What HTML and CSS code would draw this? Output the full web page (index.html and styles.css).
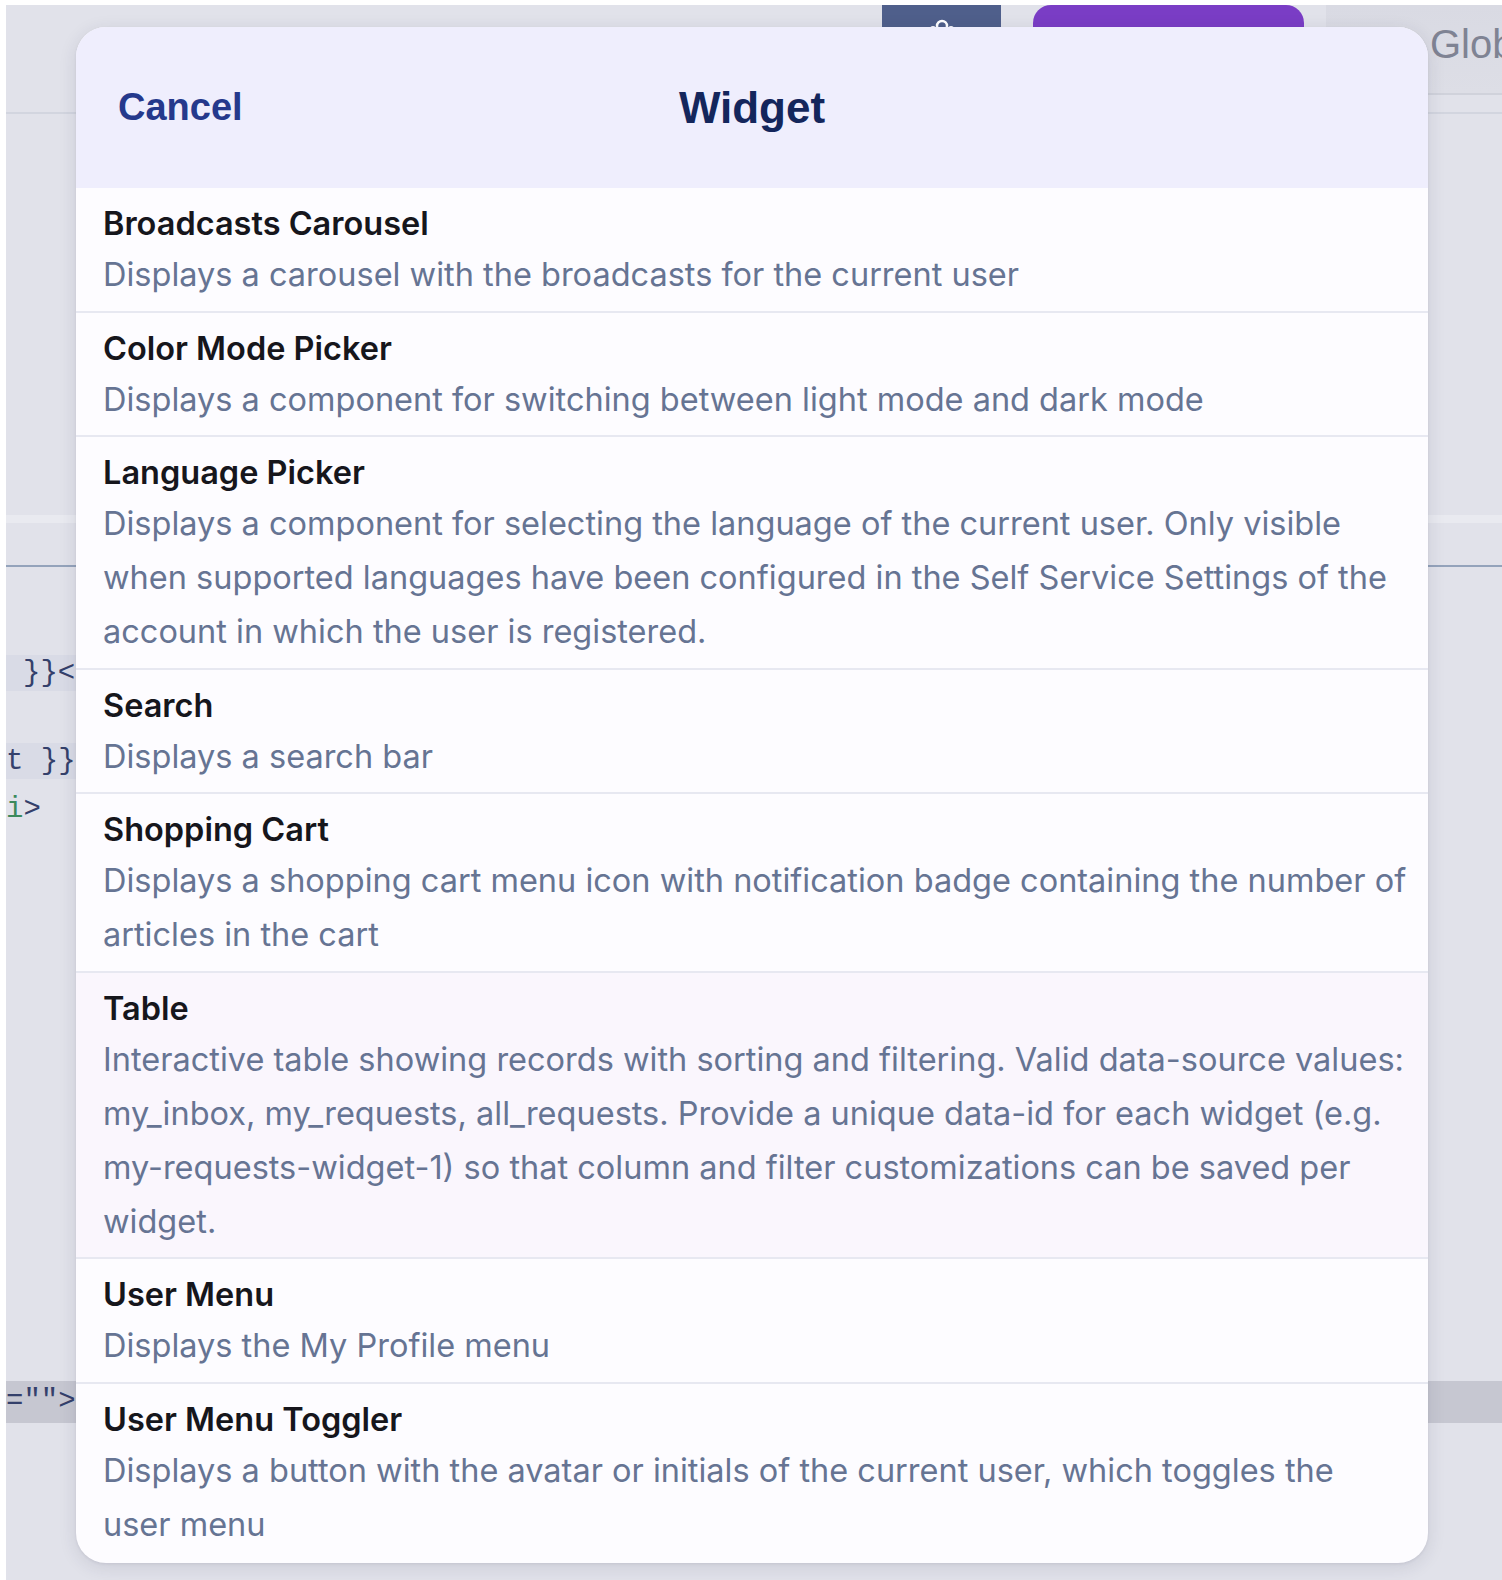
FILE: index.html
```html
<!DOCTYPE html>
<html lang="en">
<head>
<meta charset="utf-8">
<title>Widget picker</title>
<link rel="stylesheet" href="styles.css">
</head>
<body>
<div class="page">
  <header class="topbar">
    <div class="btn-slate">
      <svg class="slate-icon" width="34" height="24" viewBox="0 0 34 24"><circle cx="17" cy="9" r="5" fill="none" stroke="#fff" stroke-width="2.5"/><circle cx="8" cy="12" r="3" fill="#fff"/><circle cx="26" cy="12" r="3" fill="#fff"/></svg>
    </div>
    <div class="btn-purple"></div>
    <div class="global-panel">
      <span class="global-icon"></span>
      <span class="global-label">Global</span>
    </div>
  </header>
  <div class="top-rule"></div>
  <div class="content">
    <div class="band-light"></div>
    <div class="rule-blue"></div>
    <div class="code">
      <div class="code-line hl l1"><span class="c-blue">}}&lt;</span></div>
      <div class="code-line hl l2"><span class="c-blue">t }}</span></div>
      <div class="code-line l3"><span class="c-green">i</span><span class="c-blue">&gt;</span></div>
    </div>
    <div class="sel-band"><span class="c-blue">=""&gt;</span></div>
  </div>
</div>

<div class="modal">
  <div class="modal-head">
    <span class="cancel">Cancel</span>
    <h1 class="modal-title">Widget</h1>
    <span class="head-spacer"></span>
  </div>
  <ul class="widget-list">
    <li class="widget-item">
      <div class="w-title">Broadcasts Carousel</div>
      <div class="w-desc">Displays a carousel with the broadcasts for the current user</div>
    </li>
    <li class="widget-item">
      <div class="w-title">Color Mode Picker</div>
      <div class="w-desc">Displays a component for switching between light mode and dark mode</div>
    </li>
    <li class="widget-item">
      <div class="w-title">Language Picker</div>
      <div class="w-desc">Displays a component for selecting the language of the current user. Only visible when supported languages have been configured in the Self Service Settings of the account in which the user is registered.</div>
    </li>
    <li class="widget-item">
      <div class="w-title">Search</div>
      <div class="w-desc">Displays a search bar</div>
    </li>
    <li class="widget-item">
      <div class="w-title">Shopping Cart</div>
      <div class="w-desc">Displays a shopping cart menu icon with notification badge containing the number of articles in the cart</div>
    </li>
    <li class="widget-item active">
      <div class="w-title">Table</div>
      <div class="w-desc">Interactive table showing records with sorting and filtering. Valid data-source values: my_inbox, my_requests, all_requests. Provide a unique data-id for each widget (e.g. my-requests-widget-1) so that column and filter customizations can be saved per widget.</div>
    </li>
    <li class="widget-item">
      <div class="w-title">User Menu</div>
      <div class="w-desc">Displays the My Profile menu</div>
    </li>
    <li class="widget-item last">
      <div class="w-title">User Menu Toggler</div>
      <div class="w-desc">Displays a button with the avatar or initials of the current user, which toggles the user menu</div>
    </li>
  </ul>
</div>
</body>
</html>
```

FILE: styles.css
```css
* { box-sizing: border-box; }
html, body { margin: 0; padding: 0; background: #ffffff; }
body { width: 1502px; height: 1580px; overflow: hidden; position: relative; font-family: "Inter", "Liberation Sans", sans-serif; }

.page {
  margin: 5px 0 0 6px;
  height: 1575px;
  background: #e1e2ea;
  overflow: hidden;
}

.topbar {
  height: 90px;
  display: flex;
  align-items: flex-start;
  position: relative;
}
.btn-slate {
  flex-shrink: 0;
  margin-left: 876px;
  width: 119px;
  height: 44px;
  background: #4f5f8b;
  border-radius: 0 0 8px 8px;
  display: flex;
  justify-content: center;
  padding-top: 12px;
}
.btn-purple {
  flex-shrink: 0;
  margin-left: 32px;
  width: 271px;
  height: 44px;
  background: #7a3dc5;
  border-radius: 18px 18px 8px 8px;
}
.global-panel {
  flex: 1 0 auto;
  margin-left: 22px;
  height: 90px;
  background: linear-gradient(#d9dae3, #dddee6);
  border-bottom: 2px solid #d0d2db;
  padding-left: 46px;
  padding-top: 16px;
  white-space: nowrap;
  display: flex;
  align-items: flex-start;
}
.global-icon {
  width: 20px;
  height: 20px;
  margin-top: 6px;
  margin-right: 38px;
  border-radius: 50%;
  border: 3px solid #6d7080;
  flex-shrink: 0;
}
.global-label {
  font-family: "Liberation Sans", Arial, sans-serif;
  font-size: 40px;
  line-height: 46px;
  color: #7f8393;
}
.top-rule {
  height: 19px;
  border-bottom: 2px solid #d2d5df;
}

.content { position: relative; }
.band-light {
  margin-top: 401px;
  height: 8px;
  background: #e9eaf0;
}
.rule-blue {
  margin-top: 42px;
  height: 2px;
  background: #94a3bb;
}
.code {
  font-family: "Liberation Mono", "DejaVu Sans Mono", monospace;
  font-size: 29px;
  color: #34406b;
}
.code-line {
  height: 36px;
  line-height: 38px;
  white-space: pre;
}
.code-line.hl { background: #d9dbe6; width: 70px; }
.l1 { margin-top: 88px; padding-left: 17px; }
.l2 { margin-top: 52px; padding-left: 0; }
.l3 { margin-top: 12px; }
.c-blue { color: #34406b; }
.c-green { color: #3c8a5c; }
.sel-band {
  margin-top: 554px;
  height: 42px;
  line-height: 42px;
  background: #c6c7d1;
  font-family: "Liberation Mono", "DejaVu Sans Mono", monospace;
  font-size: 29px;
  white-space: pre;
}

.modal {
  position: absolute;
  left: 76px;
  top: 27px;
  width: 1352px;
  border-radius: 30px;
  overflow: hidden;
  background: #fdfcff;
  box-shadow: 0 4px 18px rgba(40, 44, 70, 0.12), 0 1px 3px rgba(40, 44, 70, 0.08);
}
.modal-head {
  height: 161px;
  background: #efeefd;
  display: grid;
  grid-template-columns: 1fr auto 1fr;
  align-items: center;
  padding: 0 42px;
  font-family: "Liberation Sans", Arial, sans-serif;
}
.cancel {
  font-size: 38px;
  font-weight: 700;
  color: #25398c;
  justify-self: start;
}
.modal-title {
  margin: 0;
  font-size: 44px;
  font-weight: 700;
  color: #14265c;
}
.widget-list {
  list-style: none;
  margin: 0;
  padding: 0;
}
.widget-item {
  padding: 12px 18px 8.5px 27px;
  border-bottom: 2px solid #e7e8f1;
}
.widget-item.last { border-bottom: none; padding-bottom: 11px; }
.widget-item.active { background: #faf6fd; }
.w-title {
  font-size: 32.5px;
  font-weight: 600;
  line-height: 48px;
  color: #16161c;
}
.w-desc {
  font-size: 32.5px;
  line-height: 54px;
  color: #667493;
}
```
